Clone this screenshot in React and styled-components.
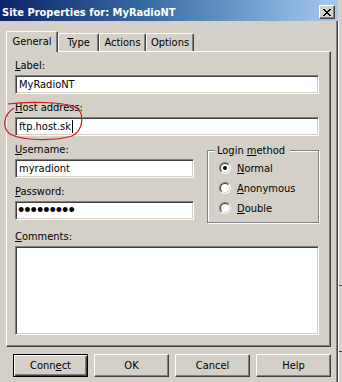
import React from "react";
import styled, { createGlobalStyle } from "styled-components";

const Global = createGlobalStyle`
  html, body { margin: 0; padding: 0; background: #d4d0c8; }
  body {
    font-family: "DejaVu Sans Condensed", "Liberation Sans", Arial, sans-serif;
    font-size: 11px;
    color: #000;
  }
`;

const Screen = styled.div`
  position: relative;
  width: 342px;
  height: 382px;
  overflow: hidden;
  display: flex;
  background: #d4d0c8;
`;

const Dialog = styled.div`
  width: 338px;
  flex: none;
  display: flex;
  flex-direction: column;
  background: #d4d0c8;
`;

const TitleBar = styled.div`
  height: 21px;
  box-sizing: border-box;
  padding: 3px 3px 0 2px;
  display: flex;
  align-items: center;
  justify-content: space-between;
  background: linear-gradient(to right, #0a246a 0%, #3a6ea5 45%, #a6caf0 100%);
`;

const TitleText = styled.span`
  color: #fff;
  font-weight: bold;
  font-size: 11px;
`;

const CloseButton = styled.div`
  width: 16px;
  height: 14px;
  box-sizing: border-box;
  background: #d4d0c8;
  border: 1px solid;
  border-color: #fff #404040 #404040 #fff;
  box-shadow: inset -1px -1px #808080;
  display: flex;
  align-items: center;
  justify-content: center;
`;

const Body = styled.div`
  flex: 1;
  border-right: 1px solid #404040;
  box-shadow: inset -1px 0 #808080;
  padding-left: 6px;
`;

const TabRow = styled.div`
  height: 30px;
  display: flex;
  align-items: flex-end;
`;

const Tab = styled.div`
  position: relative;
  box-sizing: border-box;
  width: ${({ $w }) => $w}px;
  height: ${({ $active }) => ($active ? 21 : 18)}px;
  margin-bottom: ${({ $active }) => ($active ? -1 : 0)}px;
  z-index: ${({ $active }) => ($active ? 2 : 1)};
  background: #d4d0c8;
  border-top: 1px solid #fff;
  border-left: 1px solid #fff;
  border-right: 1px solid #404040;
  border-radius: 2px 2px 0 0;
  box-shadow: inset -1px 0 #808080;
  display: flex;
  align-items: center;
  justify-content: center;
  padding-bottom: ${({ $active }) => ($active ? 1 : 0)}px;
`;

const Panel = styled.div`
  position: relative;
  width: 325px;
  box-sizing: border-box;
  padding: 7px 11px 11px 8px;
  border: 1px solid;
  border-color: #fff #404040 #404040 #fff;
  box-shadow: inset -1px -1px #808080;
  display: flex;
  flex-direction: column;
  gap: 7px;
`;

const Field = styled.div`
  display: flex;
  flex-direction: column;
  gap: 3px;
`;

const FieldLabel = styled.div`
  line-height: 13px;
  height: 13px;
`;

const Key = styled.span`
  text-decoration: underline;
  text-underline-offset: 1px;
`;

const TextBox = styled.div`
  box-sizing: border-box;
  width: ${({ $w }) => ($w ? `${$w}px` : "100%")};
  height: ${({ $h }) => $h || 19}px;
  background: #fff;
  border: 1px solid;
  border-color: #808080 #fff #fff #808080;
  box-shadow: inset 1px 1px #404040, inset -1px -1px #d4d0c8;
  padding: 0 2px 0 3px;
  display: flex;
  align-items: ${({ $h }) => ($h ? "flex-start" : "center")};
  white-space: nowrap;
  overflow: hidden;
`;

const Caret = styled.span`
  display: inline-block;
  width: 1px;
  height: 13px;
  background: #000;
  margin-left: 1px;
`;

const Dots = styled.span`
  font-family: "Liberation Sans", Arial, sans-serif;
  font-size: 18px;
  line-height: 17px;
  letter-spacing: 0px;
  margin-left: -1px;
`;

const MiddleRow = styled.div`
  display: grid;
  grid-template-columns: 179px 112px;
  column-gap: 13px;
  align-items: start;
`;

const Column = styled.div`
  display: flex;
  flex-direction: column;
  gap: 7px;
`;

const GroupBox = styled.fieldset`
  margin: 1px 0 0 0;
  padding: 1px 6px 3px 8px;
  height: 79px;
  box-sizing: border-box;
  border: 1px solid #808080;
  box-shadow: inset 1px 1px #fff, 1px 1px #fff;
  min-width: 0;
`;

const Legend = styled.legend`
  padding: 0 5px 0 2px;
  margin-left: -1px;
  line-height: 13px;
  background: #d4d0c8;
`;

const RadioRow = styled.div`
  height: 20px;
  display: flex;
  align-items: center;
  gap: 6px;
  padding-left: 3px;
`;

const RadioOuter = styled.span`
  box-sizing: border-box;
  width: 12px;
  height: 12px;
  border-radius: 50%;
  border: 1px solid;
  border-color: #808080 #fff #fff #808080;
  display: flex;
  flex: none;
`;

const RadioInner = styled.span`
  box-sizing: border-box;
  flex: 1;
  border-radius: 50%;
  border: 1px solid;
  border-color: #404040 #d4d0c8 #d4d0c8 #404040;
  background: #fff;
  display: flex;
  align-items: center;
  justify-content: center;

  &::after {
    content: "";
    width: 4px;
    height: 4px;
    border-radius: 50%;
    background: ${({ $checked }) => ($checked ? "#000" : "transparent")};
  }
`;

const ButtonRow = styled.div`
  display: flex;
  gap: 6px;
  padding: 7px 0 0 7px;
`;

const Button = styled.div`
  box-sizing: border-box;
  width: 75px;
  height: 23px;
  display: flex;
  align-items: center;
  justify-content: center;
  background: #d4d0c8;
  border: 1px solid;
  border-color: ${({ $default }) =>
    $default ? "#000" : "#fff #404040 #404040 #fff"};
  box-shadow: ${({ $default }) =>
    $default
      ? "inset 1px 1px #fff, inset -1px -1px #404040, inset -2px -2px #808080"
      : "inset -1px -1px #808080"};
`;

const SideStrip = styled.div`
  flex: 1;
  border-left: 1px solid #fff;
  background:
    linear-gradient(#404040, #404040) 0 264px / 100% 1px no-repeat,
    linear-gradient(#404040, #404040) 0 330px / 100% 1px no-repeat,
    #d4d0c8;
  margin-top: 21px;
`;

const Annotation = styled.svg`
  position: absolute;
  left: 0;
  top: 0;
  pointer-events: none;
`;

const tabs = [
  { name: "General", w: 52, active: true },
  { name: "Type", w: 41 },
  { name: "Actions", w: 47 },
  { name: "Options", w: 48 },
];

const Radio = ({ checked, children }) => (
  <RadioRow>
    <RadioOuter>
      <RadioInner $checked={checked} />
    </RadioOuter>
    <span>{children}</span>
  </RadioRow>
);

export default function App() {
  return (
    <Screen>
      <Global />
      <Dialog>
        <TitleBar>
          <TitleText>Site Properties for: MyRadioNT</TitleText>
          <CloseButton>
            <svg width="8" height="7" viewBox="0 0 8 7">
              <path d="M0 0 L7 7 M1 0 L8 7 M7 0 L0 7 M8 0 L1 7" stroke="#000" strokeWidth="1" />
            </svg>
          </CloseButton>
        </TitleBar>

        <Body>
          <TabRow>
            {tabs.map((t) => (
              <Tab key={t.name} $w={t.w} $active={t.active}>
                {t.name}
              </Tab>
            ))}
          </TabRow>

          <Panel>
            <Field>
              <FieldLabel><Key>L</Key>abel:</FieldLabel>
              <TextBox>MyRadioNT</TextBox>
            </Field>
            <Field>
              <FieldLabel><Key>H</Key>ost address:</FieldLabel>
              <TextBox>ftp.host.sk<Caret /></TextBox>
            </Field>

            <MiddleRow>
              <Column>
                <Field>
                  <FieldLabel><Key>U</Key>sername:</FieldLabel>
                  <TextBox>myradiont</TextBox>
                </Field>
                <Field>
                  <FieldLabel><Key>P</Key>assword:</FieldLabel>
                  <TextBox><Dots>•••••••••</Dots></TextBox>
                </Field>
              </Column>
              <GroupBox>
                <Legend>Login <Key>m</Key>ethod</Legend>
                <Radio checked><Key>N</Key>ormal</Radio>
                <Radio><Key>A</Key>nonymous</Radio>
                <Radio><Key>D</Key>ouble</Radio>
              </GroupBox>
            </MiddleRow>

            <Field>
              <FieldLabel><Key>C</Key>omments:</FieldLabel>
              <TextBox $h={89} />
            </Field>
          </Panel>

          <ButtonRow>
            <Button $default>Conn<Key>e</Key>ct</Button>
            <Button>OK</Button>
            <Button>Cancel</Button>
            <Button>Help</Button>
          </ButtonRow>
        </Body>
      </Dialog>
      <SideStrip />

      <Annotation width="100" height="150" viewBox="0 0 100 150">
        <path
          d="M8 104 C 28 101, 62 102, 75 107 C 85 112, 84 130, 72 136 C 55 141, 22 141, 10 134 C 2 128, 3 115, 14 108"
          fill="none"
          stroke="#d01818"
          strokeWidth="1.2"
        />
      </Annotation>
    </Screen>
  );
}
